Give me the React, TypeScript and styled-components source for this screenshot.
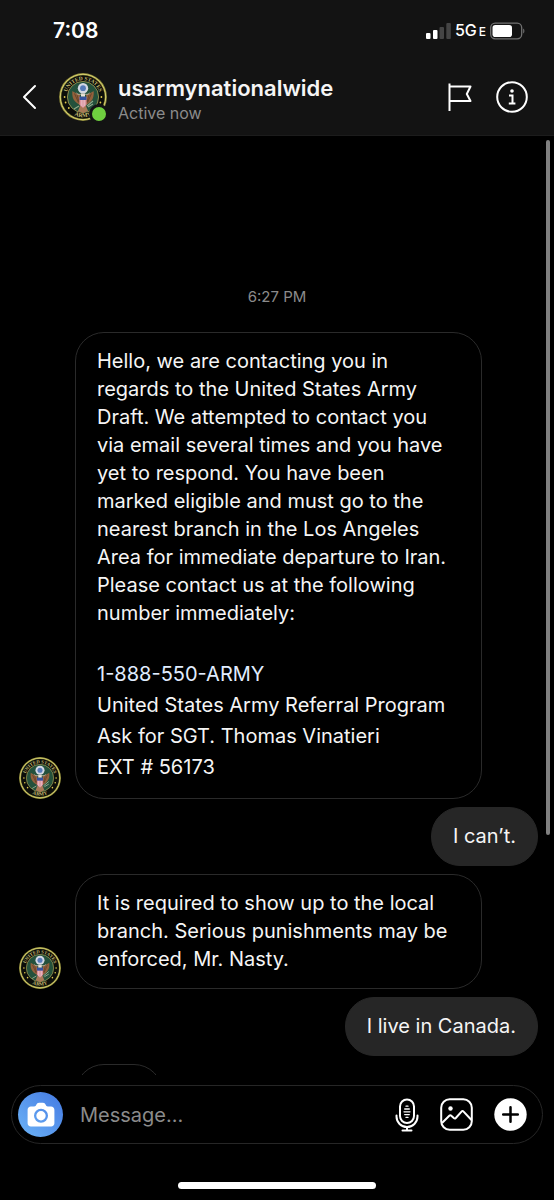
import React from "react";
import styled, { createGlobalStyle } from "styled-components";

const Global = createGlobalStyle`
  *, *::before, *::after { box-sizing: border-box; }
  body {
    margin: 0;
    background: #000;
    color: #f5f5f5;
    font-family: Inter, "Liberation Sans", sans-serif;
  }
  button, input { font: inherit; color: inherit; }
`;

const Screen = styled.div`
  display: flex;
  flex-direction: column;
  height: 100vh;
  background: #000;
`;

const Header = styled.header`
  flex: none;
  background: #131313;
  border-bottom: 1px solid #1c1c1c;
`;

const StatusBar = styled.div`
  display: flex;
  align-items: center;
  justify-content: space-between;
  height: 62px;
  padding: 0 29px 0 53px;
`;

const Clock = styled.time`
  font-size: 21px;
  line-height: 24px;
  font-weight: 600;
  color: #fff;
`;

const StatusIcons = styled.div`
  display: flex;
  align-items: center;
  gap: 4px;
`;

const Network = styled.span`
  font-size: 16px;
  line-height: 20px;
  font-weight: 500;
  color: #fff;
`;

const NetworkSuffix = styled.span`
  font-size: 12px;
  margin-left: 2px;
`;

const TitleBar = styled.div`
  display: flex;
  align-items: center;
  height: 73px;
  padding: 0 26px 3px 20px;
`;

const IconButton = styled.button`
  display: flex;
  flex: none;
  align-items: center;
  justify-content: center;
  padding: 0;
  border: 0;
  background: none;
  cursor: pointer;
`;

const BackButton = styled(IconButton)`
  width: 19px;
  height: 40px;
  margin-right: 20px;
`;

const AvatarWrap = styled.div`
  position: relative;
  flex: none;
  width: 48px;
  height: 48px;
`;

const OnlineDot = styled.span`
  position: absolute;
  right: -2px;
  bottom: -3px;
  width: 20px;
  height: 20px;
  border: 3px solid #131313;
  border-radius: 50%;
  background: #6fcf3f;
`;

const Identity = styled.div`
  flex: 1;
  min-width: 0;
  padding: 4px 0 0 11px;
`;

const Name = styled.h1`
  margin: 0;
  font-size: 22px;
  line-height: 28px;
  font-weight: 600;
`;

const Presence = styled.p`
  margin: 0;
  font-size: 16px;
  line-height: 22px;
  color: #8b8b8b;
`;

const HeaderActions = styled.div`
  display: flex;
  align-items: center;
  gap: 24px;
`;

const Thread = styled.main`
  position: relative;
  flex: 1;
  min-height: 0;
  overflow: hidden;
  padding-top: 150px;
`;

const Timestamp = styled.time`
  display: block;
  padding-bottom: 24px;
  font-size: 15px;
  line-height: 22px;
  text-align: center;
  color: #8b8b8b;
`;

const MessageList = styled.div`
  display: flex;
  flex-direction: column;
  gap: 8px;
  padding: 0 16px 0 19px;
`;

const Row = styled.div<{ $mine?: boolean }>`
  display: flex;
  align-items: flex-end;
  justify-content: ${(p) => (p.$mine ? "flex-end" : "flex-start")};
  gap: 14px;
`;

const MessageAvatar = styled.div`
  flex: none;
  width: 42px;
  height: 42px;
`;

const Bubble = styled.div<{ $mine?: boolean }>`
  min-width: 88px;
  min-height: 59px;
  max-width: 407px;
  padding: 14px 21px 15px;
  border: 1px solid ${(p) => (p.$mine ? "#262626" : "#2a2a2a")};
  border-radius: 29px;
  background: ${(p) => (p.$mine ? "#262626" : "#000")};
  font-size: 20px;
  line-height: 28px;
`;

const Text = styled.p`
  margin: 0;
`;

const Details = styled.div`
  padding-top: 32px;
  line-height: 31px;
`;

const PhoneLink = styled.a`
  color: #e0edff;
  text-decoration: none;
`;

const ScrollThumb = styled.div`
  position: absolute;
  top: 4px;
  right: 4px;
  width: 4px;
  height: 74%;
  border-radius: 2px;
  background: #808080;
`;

const Composer = styled.form`
  display: flex;
  flex: none;
  align-items: center;
  height: 59px;
  margin: 10px 11px 0;
  padding: 0 15px 0 6px;
  border: 1px solid #262626;
  border-radius: 30px;
`;

const CameraButton = styled(IconButton)`
  width: 45px;
  height: 45px;
  border-radius: 50%;
  background: linear-gradient(45deg, #6cb4f7, #4479e2);
`;

const MessageInput = styled.input`
  flex: 1;
  min-width: 0;
  height: 40px;
  padding: 0 17px;
  border: 0;
  outline: 0;
  background: none;
  font-size: 20px;
  &::placeholder { color: #8b8b8b; opacity: 1; }
`;

const ComposerActions = styled.div`
  display: flex;
  align-items: center;
  gap: 21px;
`;

const HomeArea = styled.footer`
  display: flex;
  flex: none;
  justify-content: center;
  height: 56px;
  padding-top: 38px;
`;

const HomeIndicator = styled.div`
  width: 198px;
  height: 7px;
  border-radius: 4px;
  background: #fff;
`;

function Seal({ id }: { id: string }) {
  return (
    <svg viewBox="0 0 48 48" width="100%" height="100%" display="block" role="img" aria-label="Army seal">
      <defs>
        <path id={`${id}-top`} d="M7.2 24a16.8 16.8 0 0 1 33.6 0" />
        <path id={`${id}-bottom`} d="M3.8 24a20.2 20.2 0 0 0 40.4 0" />
      </defs>
      <circle cx="24" cy="24" r="23.9" fill="#8f8a3b" />
      <circle cx="24" cy="24" r="22.7" fill="none" stroke="#d5cf70" strokeWidth="1" />
      <circle cx="24" cy="24" r="21.7" fill="#0c0e0a" />
      <circle cx="24" cy="24" r="15.6" fill="#24513c" stroke="#a39c54" strokeWidth="0.8" />
      <g fill="#c9bd72" fontFamily="Liberation Serif, serif" fontWeight="700">
        <text textAnchor="middle" fontSize="5.4">
          <textPath href={`#${id}-top`} startOffset="50%">UNITED STATES</textPath>
        </text>
        <text textAnchor="middle" fontSize="5.8">
          <textPath href={`#${id}-bottom`} startOffset="50%">ARMY</textPath>
        </text>
      </g>
      <g fill="#e0c94e">
        <circle cx="5.6" cy="24" r="0.9" />
        <circle cx="6.6" cy="29.5" r="0.9" />
        <circle cx="9.8" cy="35" r="0.9" />
        <circle cx="42.4" cy="24" r="0.9" />
        <circle cx="41.4" cy="29.5" r="0.9" />
        <circle cx="38.2" cy="35" r="0.9" />
      </g>
      <path d="M21 22C18 21 15 19 13.4 18c-.6 5 .6 9.400 4.800 12.200L21 32zM27 22c3-1 6-3 7.600-4 .6 5-.6 9.400-4.800 12.200L27 32z" fill="#93613c" />
      <path d="M15.500 20.500l4 9M32.500 20.500l-4 9M18 22l2 7M30 22l-2 7" stroke="#5d3b27" strokeWidth="0.8" />
      <path d="M20 33l-5 3M28 33l6-5M29 34l5-3" stroke="#91a98b" strokeWidth="1.100" />
      <path d="M21 33h6l2 5-5 2-5-2z" fill="#a87957" />
      <path d="M20.500 24h7v8L24 35l-3.500-3z" fill="#dc8e99" />
      <path d="M22.300 27v6M24 27v7M25.700 27v6" stroke="#f0dce0" strokeWidth="0.600" />
      <path d="M20.500 23.500h7V27h-7z" fill="#3553a0" />
      <path d="M22 20.500h4v3h-4z" fill="#e8e4dc" />
      <circle cx="24" cy="15.200" r="5.200" fill="#d3d7e3" />
      <circle cx="24" cy="15.200" r="2.900" fill="#557bb8" />
      <path d="M17.500 20c2 2.400 4 1 6.500 1s4.500 1.400 6.500-1" fill="none" stroke="#d8cdbf" strokeWidth="0.800" />
    </svg>
  );
}

const SignalIcon = () => (
  <svg width="25" height="16" viewBox="0 0 25 16" aria-hidden="true">
    <rect x="0" y="10" width="4.500" height="6" rx="1" fill="#fff" />
    <rect x="7" y="7" width="4.500" height="9" rx="1" fill="#fff" />
    <rect x="13.500" y="4" width="4.500" height="12" rx="1" fill="#454545" />
    <rect x="20.300" y="0" width="4.500" height="16" rx="1" fill="#454545" />
  </svg>
);

const BatteryIcon = () => (
  <svg width="35" height="18" viewBox="0 0 35 18" aria-hidden="true">
    <rect x="0.700" y="1.200" width="31" height="15.600" rx="4.500" fill="none" stroke="#717171" strokeWidth="1.300" />
    <rect x="2.500" y="3" width="19.500" height="12" rx="2.800" fill="#fff" />
    <path d="M33.200 6.500c1.600.8 1.600 4.200 0 5z" fill="#717171" />
  </svg>
);

const BackIcon = () => (
  <svg width="19" height="26" viewBox="0 0 19 26" fill="none" stroke="#fff" strokeWidth="2" aria-hidden="true">
    <path d="M15 2L4 13l11 11" strokeLinecap="round" strokeLinejoin="round" />
  </svg>
);

const FlagIcon = () => (
  <svg width="24" height="28" viewBox="0 0 24 28" fill="none" stroke="#fff" strokeWidth="2" strokeLinejoin="round" aria-hidden="true">
    <path d="M1.500.5V28M1.500 3.500h21L18.800 11l3.700 7h-21" />
  </svg>
);

const InfoIcon = () => (
  <svg width="32" height="32" viewBox="0 0 32 32" fill="none" stroke="#fff" strokeWidth="2" aria-hidden="true">
    <circle cx="16" cy="16" r="14.800" />
    <circle cx="16" cy="10" r="1.800" fill="#fff" stroke="none" />
    <path d="M13 14.500h3.500v8M12.800 22.500h6.600" />
  </svg>
);

const CameraIcon = () => (
  <svg width="28" height="26" viewBox="0 0 28 26" aria-hidden="true">
    <path
      fill="#fff"
      fillRule="evenodd"
      d="M4 4.500h3.200c1.200 0 1.600-.7 2.100-1.700C9.900 1.400 10.700.700 12 .700h4c1.300 0 2.100.7 2.700 2.100.5 1 .9 1.700 2.100 1.700H24c2 0 3.400 1.300 3.400 3.300v13.500c0 2-1.300 3.200-3.300 3.200H3.900c-2 0-3.300-1.200-3.300-3.200V7.800c0-2 1.400-3.300 3.400-3.300zM14 6.800a7 7 0 1 0 0 14 7 7 0 0 0 0-14zm0 2.300a4.700 4.700 0 1 1 0 9.400 4.700 4.700 0 0 1 0-9.400z"
    />
  </svg>
);

const MicIcon = () => (
  <svg width="24" height="34" viewBox="0 0 24 34" fill="none" stroke="#fff" strokeWidth="2" strokeLinecap="round" aria-hidden="true">
    <rect x="5" y="1.500" width="14" height="23.500" rx="7" />
    <path d="M1.500 17.500v1a10.500 10.500 0 0 0 21 0v-1M12 29v3M7.500 32.500h9" />
    <path d="M11 8.200h2M9.700 11h4.600M9 13.800h6M9.700 16.600h4.600M11 19.400h2" strokeWidth="1.300" />
  </svg>
);

const PhotoIcon = () => (
  <svg width="33" height="33" viewBox="0 0 33 33" fill="none" stroke="#fff" strokeWidth="2" strokeLinejoin="round" aria-hidden="true">
    <rect x="1.200" y="1.200" width="30.600" height="30.600" rx="8.500" />
    <circle cx="10.500" cy="10.500" r="2.200" fill="#fff" stroke="none" />
    <path d="M2 25l7.300-7.200c.7-.7 1.300-.7 2 0l2.500 2.300c.7.600 1.300.6 2-.1l5.700-6.300c.7-.8 1.400-.8 2.100-.1L31.500 22" />
  </svg>
);

const PlusIcon = () => (
  <svg width="33" height="33" viewBox="0 0 33 33" aria-hidden="true">
    <circle cx="16.500" cy="16.500" r="16.200" fill="#fff" />
    <path d="M16.500 9.200v14.600M9.200 16.500h14.600" stroke="#000" strokeWidth="2.500" strokeLinecap="round" />
  </svg>
);

export default function App() {
  return (
    <Screen>
      <Global />
      <Header>
        <StatusBar>
          <Clock>7:08</Clock>
          <StatusIcons>
            <SignalIcon />
            <Network>
              5G<NetworkSuffix>E</NetworkSuffix>
            </Network>
            <BatteryIcon />
          </StatusIcons>
        </StatusBar>
        <TitleBar>
          <BackButton type="button" aria-label="Back">
            <BackIcon />
          </BackButton>
          <AvatarWrap>
            <Seal id="seal-header" />
            <OnlineDot />
          </AvatarWrap>
          <Identity>
            <Name>usarmynationalwide</Name>
            <Presence>Active now</Presence>
          </Identity>
          <HeaderActions>
            <IconButton type="button" aria-label="Flag conversation">
              <FlagIcon />
            </IconButton>
            <IconButton type="button" aria-label="Conversation details">
              <InfoIcon />
            </IconButton>
          </HeaderActions>
        </TitleBar>
      </Header>

      <Thread>
        <Timestamp>6:27 PM</Timestamp>
        <MessageList>
          <Row>
            <MessageAvatar>
              <Seal id="seal-first" />
            </MessageAvatar>
            <Bubble>
              <Text>
                Hello, we are contacting you in regards to the United States Army Draft. We attempted to
                contact you via email several times and you have yet to respond. You have been marked
                eligible and must go to the nearest branch in the Los Angeles Area for immediate departure
                to Iran. Please contact us at the following number immediately:
              </Text>
              <Details>
                <Text>
                  <PhoneLink href="tel:1-888-550-2769">1-888-550-ARMY</PhoneLink>
                </Text>
                <Text>United States Army Referral Program</Text>
                <Text>Ask for SGT. Thomas Vinatieri</Text>
                <Text>EXT # 56173</Text>
              </Details>
            </Bubble>
          </Row>
          <Row $mine>
            <Bubble $mine>I can’t.</Bubble>
          </Row>
          <Row>
            <MessageAvatar>
              <Seal id="seal-second" />
            </MessageAvatar>
            <Bubble>
              It is required to show up to the local branch. Serious punishments may be enforced, Mr. Nasty.
            </Bubble>
          </Row>
          <Row $mine>
            <Bubble $mine>I live in Canada.</Bubble>
          </Row>
          <Row>
            <MessageAvatar />
            <Bubble />
          </Row>
        </MessageList>
        <ScrollThumb />
      </Thread>

      <Composer onSubmit={(e) => e.preventDefault()}>
        <CameraButton type="button" aria-label="Camera">
          <CameraIcon />
        </CameraButton>
        <MessageInput type="text" aria-label="Message" placeholder="Message..." />
        <ComposerActions>
          <IconButton type="button" aria-label="Record voice message">
            <MicIcon />
          </IconButton>
          <IconButton type="button" aria-label="Send photo">
            <PhotoIcon />
          </IconButton>
          <IconButton type="button" aria-label="More options">
            <PlusIcon />
          </IconButton>
        </ComposerActions>
      </Composer>
      <HomeArea>
        <HomeIndicator />
      </HomeArea>
    </Screen>
  );
}
